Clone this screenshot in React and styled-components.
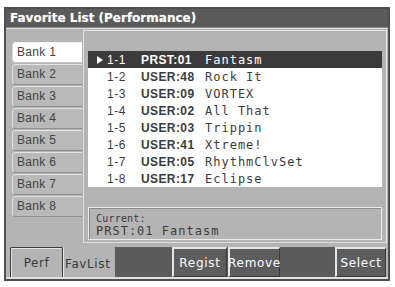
import React from "react";
import styled, { createGlobalStyle } from "styled-components";

const Global = createGlobalStyle`
  html, body { margin: 0; padding: 0; background: #ffffff; }
  #root { width: 395px; height: 287px; }
`;

const Page = styled.div`
  padding: 7px 5px 6px 4px;
  box-sizing: border-box;
  width: 395px;
  height: 287px;
`;

const Frame = styled.div`
  width: 386px;
  height: 274px;
  box-sizing: border-box;
  border: 2px solid #4e4e4e;
  background: #b4b4b4;
  display: flex;
  flex-direction: column;
`;

const TitleBar = styled.div`
  height: 18px;
  background: #5b5b5b;
  color: #ffffff;
  font-family: "DejaVu Sans", sans-serif;
  font-weight: bold;
  font-size: 12px;
  letter-spacing: 0px;
  line-height: 18px;
  padding-left: 4px;
  text-shadow: 0 0 1px rgba(255,255,255,0.4);
  border-bottom: 1px solid #8a8a8a;
`;

const Body = styled.div`
  flex: 1;
  display: flex;
  flex-direction: column;
  border-top: 1px solid #dedede;
  background: #b4b4b4;
`;

const Main = styled.div`
  display: flex;
  padding-top: 1px;
`;

const BankColumn = styled.div`
  width: 77px;
  box-sizing: border-box;
  padding: 12px 0 0 6px;
  display: flex;
  flex-direction: column;
  gap: 1px;
`;

const BankTab = styled.div`
  width: 70px;
  height: 21px;
  box-sizing: border-box;
  border-radius: 4px 0 0 4px;
  border-top: 1px solid ${p => (p.$active ? "#f4f4f4" : "#e4e4e4")};
  border-left: 1px solid ${p => (p.$active ? "#dcdcdc" : "#e0e0e0")};
  border-bottom: 1px solid ${p => (p.$active ? "#c8c8c8" : "#8e8e8e")};
  background: ${p => (p.$active ? "#ffffff" : "#b9b9b9")};
  color: #444444;
  font-family: "Liberation Sans", Arial, sans-serif;
  font-size: 12px;
  letter-spacing: 0.3px;
  line-height: 19px;
  padding-left: 4px;
`;

const Panel = styled.div`
  width: 304px;
  height: 213px;
  box-sizing: border-box;
  border-top: 1px solid #e2e2e2;
  border-left: 1px solid #e2e2e2;
  border-right: 1px solid #e8e8e8;
  border-bottom: 1px solid #dcdcdc;
  background: #b4b4b4;
  padding: 20px 3px 2px 4px;
  display: flex;
  flex-direction: column;
`;

const List = styled.div`
  width: 294px;
  height: 136px;
  background: #ffffff;
  display: flex;
  flex-direction: column;
`;

const Row = styled.div`
  height: 17px;
  display: grid;
  grid-template-columns: 19px 34px 64px 1fr;
  align-items: center;
  background: ${p => (p.$sel ? "#3b3b3b" : "transparent")};
  color: ${p => (p.$sel ? "#ffffff" : "#3c3c3c")};
`;

const Arrow = styled.span`
  justify-self: end;
  margin-right: 4px;
  width: 0;
  height: 0;
  border-top: 4px solid transparent;
  border-bottom: 4px solid transparent;
  border-left: 6px solid #ffffff;
`;

const Num = styled.span`
  font-family: "Liberation Sans", Arial, sans-serif;
  font-size: 12px;
  letter-spacing: 0.6px;
`;

const Code = styled.span`
  font-family: "Liberation Sans", Arial, sans-serif;
  font-weight: bold;
  font-size: 12px;
  letter-spacing: 0.4px;
`;

const Name = styled.span`
  font-family: "DejaVu Sans Mono", monospace;
  font-size: 12px;
  letter-spacing: 1px;
`;

const Current = styled.div`
  margin-top: 20px;
  width: 294px;
  height: 33px;
  box-sizing: border-box;
  border: 1px solid #ececec;
  box-shadow: inset 1px 1px 0 #8c8c8c;
  padding: 5px 0 0 7px;
  color: #3c3c3c;
  display: flex;
  flex-direction: column;
`;

const CurLabel = styled.div`
  font-family: "DejaVu Sans Mono", monospace;
  font-size: 10px;
  letter-spacing: 0.2px;
  line-height: 12px;
`;

const CurValue = styled.div`
  font-family: "DejaVu Sans Mono", monospace;
  font-size: 12px;
  letter-spacing: 1px;
  line-height: 13px;
`;

const Bottom = styled.div`
  margin-top: 4px;
  height: 30px;
  display: flex;
  padding-left: 4px;
  border-bottom: 2px solid #e0e0e0;
`;

const TabBtn = styled.div`
  width: ${p => p.$w}px;
  box-sizing: border-box;
  height: 30px;
  font-family: "DejaVu Sans", sans-serif;
  font-size: 12px;
  letter-spacing: 0.6px;
  color: #3a3a3a;
  display: flex;
  align-items: center;
  justify-content: center;
  background: #b4b4b4;
  ${p =>
    p.$active
      ? `border-left: 1px solid #e6e6e6; padding-top: 3px; justify-content: flex-start; padding-left: 1px;`
      : `border: 1px solid #3c3c3c; border-bottom: none; box-shadow: inset 1px 1px 0 #e4e4e4; border-radius: 2px 2px 0 0;`}
`;

const DarkStrip = styled.div`
  flex: 1;
  display: flex;
  background: #5b5b5b;
  margin-right: 2px;
`;

const Spacer = styled.div`
  width: ${p => p.$w}px;
`;

const Button = styled.div`
  width: ${p => p.$w}px;
  box-sizing: border-box;
  height: 30px;
  border-top: 2px solid #e4e4e4;
  border-left: 2px solid #e4e4e4;
  border-right: 1px solid #3a3a3a;
  border-bottom: 1px solid #3a3a3a;
  background: #5d5d5d;
  color: #ffffff;
  font-family: "DejaVu Sans", sans-serif;
  font-size: 12px;
  letter-spacing: 0.7px;
  display: flex;
  align-items: center;
  justify-content: center;
`;

const rows = [
  ["1-1", "PRST:01", "Fantasm"],
  ["1-2", "USER:48", "Rock It"],
  ["1-3", "USER:09", "VORTEX"],
  ["1-4", "USER:02", "All That"],
  ["1-5", "USER:03", "Trippin"],
  ["1-6", "USER:41", "Xtreme!"],
  ["1-7", "USER:05", "RhythmClvSet"],
  ["1-8", "USER:17", "Eclipse"],
];

export default function App() {
  return (
    <>
      <Global />
      <Page>
        <Frame>
          <TitleBar>Favorite List (Performance)</TitleBar>
          <Body>
            <Main>
              <BankColumn>
                {[1, 2, 3, 4, 5, 6, 7, 8].map(n => (
                  <BankTab key={n} $active={n === 1}>Bank {n}</BankTab>
                ))}
              </BankColumn>
              <Panel>
                <List>
                  {rows.map((r, i) => (
                    <Row key={r[0]} $sel={i === 0}>
                      {i === 0 ? <Arrow /> : <span />}
                      <Num>{r[0]}</Num>
                      <Code>{r[1]}</Code>
                      <Name>{r[2]}</Name>
                    </Row>
                  ))}
                </List>
                <Current>
                  <CurLabel>Current:</CurLabel>
                  <CurValue>PRST:01 Fantasm</CurValue>
                </Current>
              </Panel>
            </Main>
            <Bottom>
              <TabBtn $w={53}>Perf</TabBtn>
              <TabBtn $w={52} $active>FavList</TabBtn>
              <DarkStrip>
                <Spacer $w={57} />
                <Button $w={55}>Regist</Button>
                <Spacer $w={1} />
                <Button $w={52}>Remove</Button>
                <Spacer $w={55} />
                <Button $w={51}>Select</Button>
              </DarkStrip>
            </Bottom>
          </Body>
        </Frame>
      </Page>
    </>
  );
}
